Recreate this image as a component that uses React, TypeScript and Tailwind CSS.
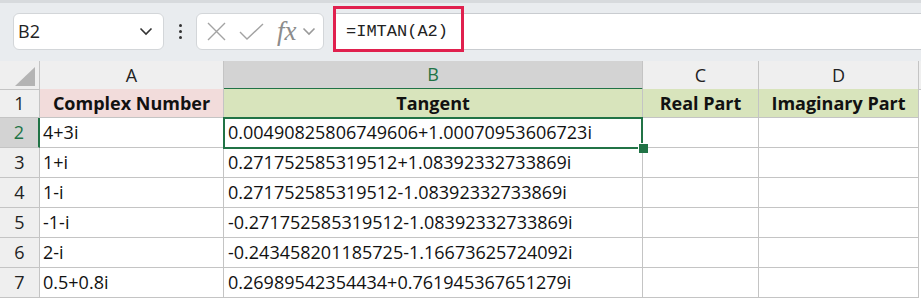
import React from "react";

const rows = [
  { n: 2, a: "4+3i", b: "0.00490825806749606+1.00070953606723i" },
  { n: 3, a: "1+i", b: "0.271752585319512+1.08392332733869i" },
  { n: 4, a: "1-i", b: "0.271752585319512-1.08392332733869i" },
  { n: 5, a: "-1-i", b: "-0.271752585319512-1.08392332733869i" },
  { n: 6, a: "2-i", b: "-0.243458201185725-1.16673625724092i" },
  { n: 7, a: "0.5+0.8i", b: "0.26989542354434+0.761945367651279i" },
];

const cols = "grid grid-cols-[40px_184px_419px_116px_160px_2px]";

function Chevron({ className }: { className?: string }) {
  return (
    <svg width="14" height="9" viewBox="0 0 14 9" className={className}>
      <path d="M1.5 1.5 L7 7 L12.5 1.5" fill="none" stroke="currentColor" strokeWidth="1.6" />
    </svg>
  );
}

function Toolbar() {
  return (
    <div className="relative h-[61px] bg-[#e9ecef] border-t-[3px] border-[#d7dadd]">
      <div className="flex items-start pt-[10px]">
        {/* name box */}
        <div className="ml-[13px] flex h-[37px] w-[151px] items-center justify-between rounded-[6px] border border-[#d3d6d9] bg-white pl-[4px] pr-[10px]">
          <span className="text-[18px] text-[#222]">B2</span>
          <Chevron className="text-[#333]" />
        </div>
        <div className="flex h-[37px] w-[32px] flex-col items-center justify-center gap-[3px]">
          <span className="h-[3px] w-[3px] rounded-full bg-[#333]" />
          <span className="h-[3px] w-[3px] rounded-full bg-[#333]" />
          <span className="h-[3px] w-[3px] rounded-full bg-[#333]" />
        </div>
        {/* function buttons */}
        <div className="flex h-[37px] w-[128px] items-center rounded-[6px] border border-[#d3d6d9] bg-white pl-[9px]">
          <svg width="21" height="21" viewBox="0 0 21 21">
            <path d="M2 2 L19 19 M19 2 L2 19" stroke="#a3a3a3" strokeWidth="1.4" fill="none" />
          </svg>
          <svg width="25" height="20" viewBox="0 0 25 20" className="ml-[12px]">
            <path d="M1 10 L8 17 L24 2" stroke="#a3a3a3" strokeWidth="1.4" fill="none" />
          </svg>
          <span
            className="ml-[13px] text-[27px] italic leading-none text-[#8c8c8c]"
            style={{ fontFamily: "'Liberation Serif', 'DejaVu Serif', serif" }}
          >
            fx
          </span>
          <Chevron className="ml-[5px] text-[#9a9a9a]" />
        </div>
        {/* formula bar */}
        <div className="ml-[10px] flex h-[37px] flex-1 items-center border-y border-[#c9ccd0] bg-white pl-[12px]">
          <span
            className="text-[17px] text-[#222]"
            style={{ fontFamily: "'Liberation Mono', 'DejaVu Sans Mono', monospace" }}
          >
            =IMTAN(A2)
          </span>
        </div>
      </div>
      <div className="pointer-events-none absolute left-[333px] top-[3px] h-[46px] w-[131px] border-[3px] border-[#e0204e]" />
    </div>
  );
}

export default function App() {
  return (
    <div
      className="h-[298px] w-[921px] overflow-hidden bg-white text-[#111]"
      style={{ fontFamily: "'Open Sans', 'Noto Sans', sans-serif" }}
    >
      <Toolbar />
      {/* column headers */}
      <div className={`${cols} h-[28px] bg-[#efefef] text-[18px] text-[#222]`}>
        <div className="relative border-r border-b border-[#c4c4c4]">
          <svg width="20" height="19" viewBox="0 0 20 19" className="absolute bottom-[3px] right-[4px]">
            <path d="M20 0 L20 19 L0 19 Z" fill="#b4b4b4" />
          </svg>
        </div>
        <div className="flex items-center justify-center border-r border-b border-[#c4c4c4]">A</div>
        <div className="flex items-center justify-center border-r border-b-2 border-r-[#c4c4c4] border-b-[#217346] bg-[#d3d3d3] text-[#217346]">
          B
        </div>
        <div className="flex items-center justify-center border-r border-b border-[#c4c4c4]">C</div>
        <div className="flex items-center justify-center border-r border-b border-[#c4c4c4]">D</div>
        <div className="border-b border-[#c4c4c4]" />
      </div>
      {/* row 1 */}
      <div className={`${cols} h-[29px] text-[18px] font-bold`}>
        <div className="flex items-center justify-center border-r border-b border-[#c4c4c4] bg-[#efefef] font-normal text-[#222]">
          1
        </div>
        <div className="flex items-center justify-center border-r border-b border-[#c4c4c4] bg-[#f2dcdb]">
          Complex Number
        </div>
        <div className="flex items-center justify-center border-r border-b border-[#c4c4c4] bg-[#d8e4bc]">
          Tangent
        </div>
        <div className="flex items-center justify-center border-r border-b border-[#c4c4c4] bg-[#d8e4bc]">
          Real Part
        </div>
        <div className="flex items-center justify-center border-r border-b border-[#c4c4c4] bg-[#d8e4bc]">
          Imaginary Part
        </div>
        <div />
      </div>
      {rows.map((r) => {
        const sel = r.n === 2;
        return (
          <div key={r.n} className={`${cols} h-[30px] text-[18px]`}>
            <div
              className={
                sel
                  ? "flex items-center justify-center border-r-2 border-b border-r-[#217346] border-b-[#c4c4c4] bg-[#d3d3d3] text-[#217346]"
                  : "flex items-center justify-center border-r border-b border-[#c4c4c4] bg-[#efefef] text-[#222]"
              }
            >
              {r.n}
            </div>
            <div className="flex items-center border-r border-b border-[#c4c4c4] pl-[3px]">{r.a}</div>
            <div className="relative flex items-center border-r border-b border-[#c4c4c4] pl-[4px]">
              {r.b}
              {sel && (
                <>
                  <div className="pointer-events-none absolute -left-[1px] -top-[1px] z-10 h-[32px] w-[420px] border-2 border-[#217346]" />
                  <div className="absolute -bottom-[6px] -right-[6px] z-20 h-[10px] w-[10px] border-l border-t border-white bg-[#217346]" />
                </>
              )}
            </div>
            <div className="border-r border-b border-[#c4c4c4]" />
            <div className="border-r border-b border-[#c4c4c4]" />
            <div />
          </div>
        );
      })}
    </div>
  );
}
